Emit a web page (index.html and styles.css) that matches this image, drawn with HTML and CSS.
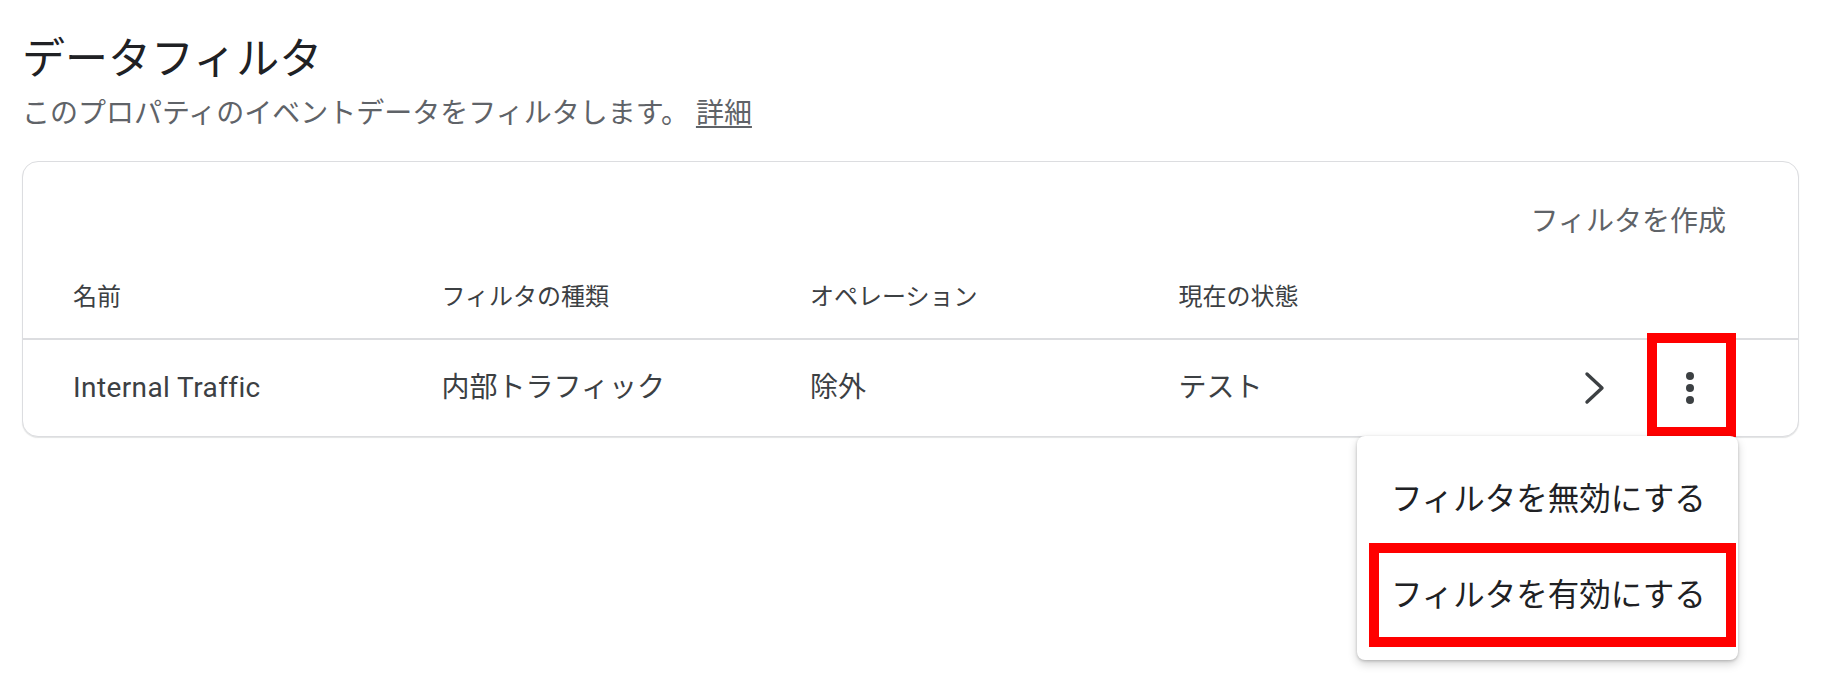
FILE: index.html
```html
<!DOCTYPE html>
<html lang="ja">
<head>
<meta charset="utf-8">
<title>データフィルタ</title>
<link rel="stylesheet" href="styles.css">
</head>
<body>
<div class="page">
  <h1 class="title">データフィルタ</h1>
  <p class="subtitle">このプロパティのイベントデータをフィルタします。 <a class="link" href="#">詳細</a></p>

  <div class="card">
    <div class="toolbar">
      <span class="create">フィルタを作成</span>
    </div>
    <div class="grid head">
      <div class="cell">名前</div>
      <div class="cell">フィルタの種類</div>
      <div class="cell">オペレーション</div>
      <div class="cell">現在の状態</div>
      <div class="cell"></div>
      <div class="cell"></div>
    </div>
    <div class="grid row">
      <div class="cell name">Internal Traffic</div>
      <div class="cell">内部トラフィック</div>
      <div class="cell">除外</div>
      <div class="cell">テスト</div>
      <div class="cell icon-cell">
        <svg class="chevron" width="22" height="34" viewBox="0 0 22 34">
          <polyline points="3,3 18,17 3,31" fill="none" stroke="#3c4043" stroke-width="3.4" stroke-linecap="round" stroke-linejoin="round"/>
        </svg>
      </div>
      <div class="cell icon-cell kebab-cell">
        <span class="kebab"><span class="dot"></span><span class="dot"></span><span class="dot"></span></span>
        <span class="mark mark-kebab"></span>
      </div>
    </div>
  </div>

  <div class="menu">
    <div class="menu-item">フィルタを無効にする</div>
    <div class="menu-item">フィルタを有効にする<span class="mark mark-item"></span></div>
  </div>
</div>
</body>
</html>
```

FILE: styles.css
```css
* {
  box-sizing: border-box;
}

html, body {
  margin: 0;
  padding: 0;
  background: #ffffff;
}

body {
  font-family: Roboto, "Noto Sans CJK JP", sans-serif;
  color: #3c4043;
}

.page {
  position: relative;
  padding: 31px 23px 0 22px;
  height: 692px;
}

.title {
  margin: 0;
  font-size: 43px;
  font-weight: 400;
  line-height: 56px;
  color: #202124;
}

.subtitle {
  margin: 7px 0 0 0;
  font-size: 28px;
  line-height: 40px;
  color: #5f6368;
}

.link {
  color: #5f6368;
  text-decoration: underline;
  text-underline-offset: 3px;
  text-decoration-thickness: 2px;
}

.card {
  margin-top: 27px;
  border: 1px solid #dcdde0;
  border-radius: 16px;
  box-shadow: 0 1px 1px rgba(60, 64, 67, 0.15);
  background: #fff;
}

.toolbar {
  display: flex;
  justify-content: flex-end;
  height: 80px;
  padding: 40px 72px 0 0;
}

.create {
  font-size: 28px;
  line-height: 40px;
  color: #5f6368;
}

.grid {
  display: grid;
  grid-template-columns: repeat(4, 368.5px) 95px 96px;
  padding-left: 50px;
}

.head {
  height: 96px;
  padding-top: 40px;
  font-size: 24px;
  line-height: 30px;
  color: #3c4043;
}

.row {
  height: 98px;
  border-top: 2px solid #dcdde0;
  align-items: center;
  font-size: 28px;
  line-height: 40px;
  color: #3c4043;
}

.name {
  letter-spacing: 0.4px;
}

.icon-cell {
  display: flex;
  align-items: center;
  justify-content: center;
  height: 100%;
}

.kebab-cell {
  position: relative;
}

.kebab {
  display: flex;
  flex-direction: column;
  align-items: center;
  gap: 4px;
}

.dot {
  width: 8px;
  height: 8px;
  border-radius: 50%;
  background: #3c4043;
}

.mark {
  position: absolute;
  border: 10px solid #ff0000;
  pointer-events: none;
}

.mark-kebab {
  left: 5px;
  top: -7px;
  width: 89px;
  height: 104px;
}

.menu {
  position: absolute;
  left: 1357px;
  top: 436px;
  width: 381px;
  padding: 16px 0;
  background: #fff;
  border-radius: 8px;
  box-shadow: 0 4px 10px rgba(0, 0, 0, 0.18), 0 1px 3px rgba(0, 0, 0, 0.2);
}

.menu-item {
  position: relative;
  height: 96px;
  display: flex;
  align-items: center;
  padding-left: 34px;
  font-size: 31.5px;
  line-height: 40px;
  color: #202124;
}

.mark-item {
  left: 12px;
  right: 2px;
  top: -5px;
  bottom: -3px;
}
```
